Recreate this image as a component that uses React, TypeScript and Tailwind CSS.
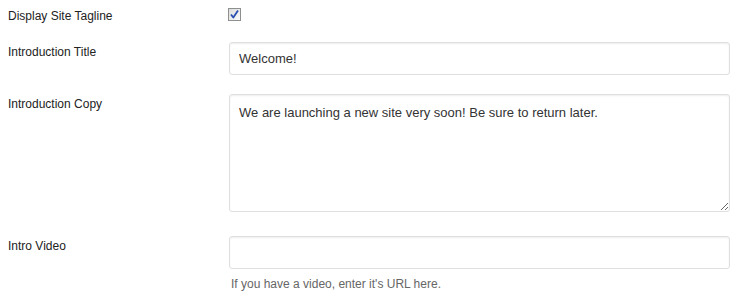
import React from "react";

const font = { fontFamily: '"Liberation Sans", Arial, sans-serif' };

export default function App() {
  return (
    <div className="w-[751px] h-[299px] bg-white text-[#222] relative overflow-hidden" style={font}>
      {/* Row 1 */}
      <div className="flex h-[42px] pl-[8px]">
        <div className="w-[220px] pt-[9px] text-[12px] leading-[14px]">Display Site Tagline</div>
        <div className="pt-[8px]">
          <div className="w-[13px] h-[13px] border border-[#8e8f8f] bg-gradient-to-br from-[#dcdcdc] to-[#fbfbfb] flex items-center justify-center">
            <svg width="11" height="11" viewBox="0 0 11 11">
              <path d="M2 5.5 L4.3 8.5 L9 1.5" fill="none" stroke="#2a4fb0" strokeWidth="1.8" strokeLinejoin="round" />
            </svg>
          </div>
        </div>
      </div>
      {/* Row 2 */}
      <div className="flex h-[52px] pl-[8px]">
        <div className="w-[221px] pt-[3px] text-[12px] leading-[14px]">Introduction Title</div>
        <div>
          <input
            readOnly
            value="Welcome!"
            className="w-[501px] h-[33px] border border-[#dfdfdf] rounded-[3px] px-[9px] text-[13px] text-[#333] outline-none shadow-[inset_0_1px_2px_rgba(0,0,0,0.07)]"
            style={font}
          />
        </div>
      </div>
      {/* Row 3 */}
      <div className="flex h-[142px] pl-[8px]">
        <div className="w-[221px] pt-[3px] text-[12px] leading-[14px]">Introduction Copy</div>
        <div>
          <textarea
            readOnly
            value="We are launching a new site very soon! Be sure to return later."
            className="block w-[501px] h-[118px] border border-[#dfdfdf] rounded-[3px] px-[9px] py-[10px] text-[13px] leading-[16px] text-[#333] outline-none shadow-[inset_0_1px_2px_rgba(0,0,0,0.07)]"
            style={font}
          />
        </div>
      </div>
      {/* Row 4 */}
      <div className="flex pl-[8px]">
        <div className="w-[221px] pt-[3px] text-[12px] leading-[14px]">Intro Video</div>
        <div>
          <input
            readOnly
            value=""
            className="block w-[501px] h-[33px] border border-[#dfdfdf] rounded-[3px] px-[9px] text-[13px] text-[#333] outline-none shadow-[inset_0_1px_2px_rgba(0,0,0,0.07)]"
            style={font}
          />
          <div className="mt-[8px] pl-[2px] text-[12px] leading-[14px] text-[#666]">If you have a video, enter it's URL here.</div>
        </div>
      </div>
    </div>
  );
}
